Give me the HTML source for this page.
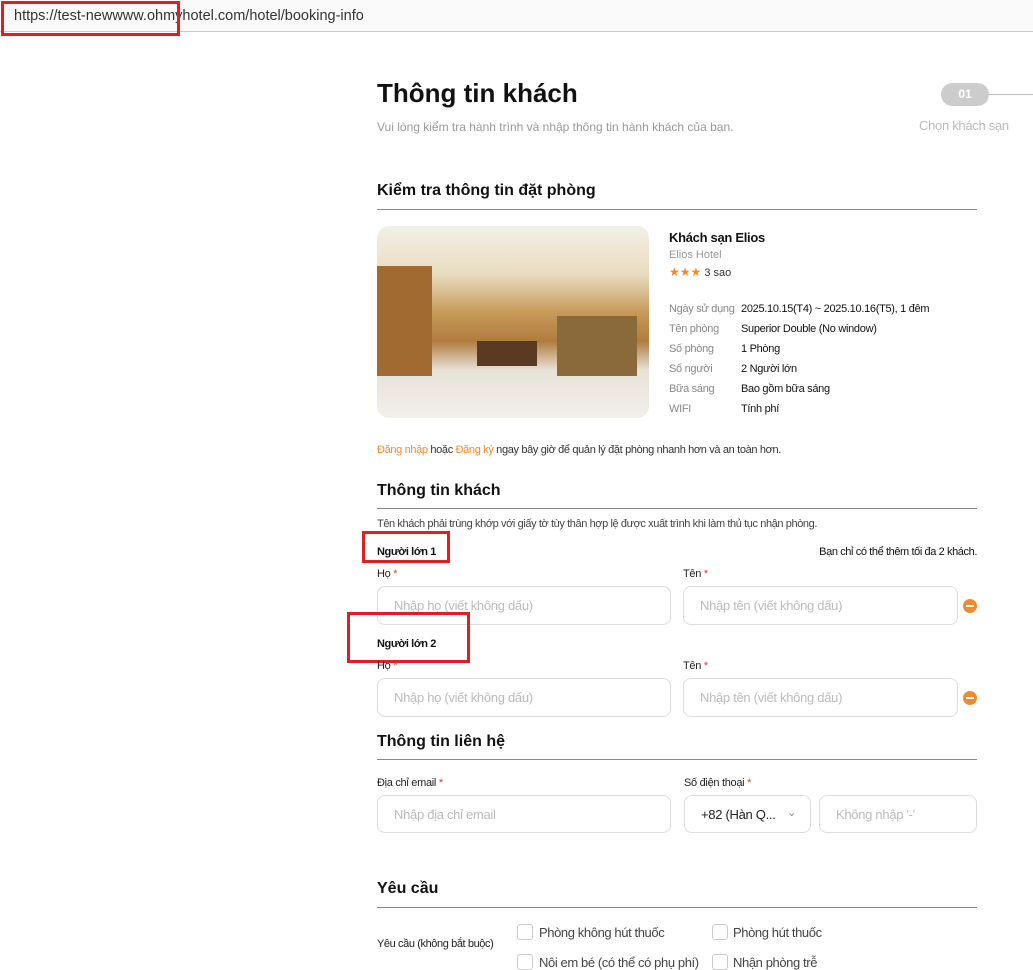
<!DOCTYPE html>
<html><head><meta charset="utf-8"><style>
*{margin:0;padding:0;box-sizing:border-box}
body{width:1033px;height:969px;overflow:hidden;background:#fff;font-family:"Liberation Sans",Arial,sans-serif;color:#111;position:relative}
.a{position:absolute;white-space:nowrap}
.red{position:absolute;border:3px solid #e02020}
.h2{font-size:16px;font-weight:bold}
.line{position:absolute;left:377px;width:600px;height:1px;background:#888}
.inp{position:absolute;height:39px;border:1px solid #ddd;border-radius:8px;font-size:13px;color:#bbb;padding:11px 0 0 16px;letter-spacing:-0.3px}
.lbl{font-size:11px;color:#222;letter-spacing:-0.3px}
.st{color:#e33}
.minus{position:absolute;width:14px;height:14px;border-radius:50%;background:#f08a30}
.minus:after{content:"";position:absolute;left:3px;top:6px;width:8px;height:2px;background:#fff}
.g{color:#888;font-size:11px;letter-spacing:-0.3px}
.v{font-size:11px;color:#111;letter-spacing:-0.3px}
.cb{position:absolute;width:16px;height:16px;border:1px solid #ccc;border-radius:3px}
</style></head><body>
<div class="a" style="left:0;top:0;width:1033px;height:32px;background:#fafafa;border-bottom:1px solid #ccc"></div>
<div class="a" style="left:14px;top:8px;font-size:14.5px;color:#333">https://test-newwww.ohmyhotel.com/hotel/booking-info</div>
<div class="red" style="left:1px;top:1px;width:179px;height:35px"></div>

<div class="a" style="left:377px;top:78px;font-size:26px;font-weight:bold">Thông tin khách</div>
<div class="a" style="left:377px;top:120px;font-size:12px;color:#999">Vui lòng kiểm tra hành trình và nhập thông tin hành khách của bạn.</div>
<div class="a" style="left:941px;top:83px;width:48px;height:23px;border-radius:12px;background:#ccc;color:#fff;font-size:12px;font-weight:bold;text-align:center;line-height:23px">01</div>
<div class="a" style="left:989px;top:94px;width:44px;height:1px;background:#bbb"></div>
<div class="a" style="left:919px;top:118px;font-size:13px;color:#bbb;letter-spacing:-0.3px">Chọn khách sạn</div>

<div class="a h2" style="left:377px;top:182px">Kiểm tra thông tin đặt phòng</div>
<div class="line" style="top:209px"></div>
<div class="a" style="left:377px;top:226px;width:272px;height:192px;border-radius:12px;overflow:hidden;background:linear-gradient(180deg,#f4f0e6 0%,#e9dcc0 25%,#c79a5a 45%,#b07c3e 60%,#e8e2d8 75%,#f2efea 100%)">
<div style="position:absolute;left:0;top:40px;width:55px;height:110px;background:#a06a30"></div>
<div style="position:absolute;left:100px;top:115px;width:60px;height:25px;background:#5a3a20"></div>
<div style="position:absolute;left:180px;top:90px;width:80px;height:60px;background:#8a6a3a"></div>
</div>
<div class="a" style="left:669px;top:230px;font-size:13px;font-weight:bold;letter-spacing:-0.3px">Khách sạn Elios</div>
<div class="a" style="left:669px;top:249px;font-size:11px;color:#999">Elios Hotel</div>
<div class="a" style="left:669px;top:265px;font-size:11px;color:#333"><span style="color:#f08a30;font-size:12px">★★★</span> 3 sao</div>
<div class="a g" style="left:669px;top:303px">Ngày sử dụng</div><div class="a v" style="left:741px;top:303px">2025.10.15(T4) ~ 2025.10.16(T5), 1 đêm</div>
<div class="a g" style="left:669px;top:323px">Tên phòng</div><div class="a v" style="left:741px;top:323px">Superior Double (No window)</div>
<div class="a g" style="left:669px;top:343px">Số phòng</div><div class="a v" style="left:741px;top:343px">1 Phòng</div>
<div class="a g" style="left:669px;top:363px">Số người</div><div class="a v" style="left:741px;top:363px">2 Người lớn</div>
<div class="a g" style="left:669px;top:383px">Bữa sáng</div><div class="a v" style="left:741px;top:383px">Bao gồm bữa sáng</div>
<div class="a g" style="left:669px;top:403px">WIFI</div><div class="a v" style="left:741px;top:403px">Tính phí</div>

<div class="a" style="left:377px;top:444px;font-size:11px;color:#333;letter-spacing:-0.35px"><span style="color:#f08a30">Đăng nhập</span> hoặc <span style="color:#f08a30">Đăng ký</span> ngay bây giờ để quản lý đặt phòng nhanh hơn và an toàn hơn.</div>

<div class="a h2" style="left:377px;top:482px">Thông tin khách</div>
<div class="line" style="top:508px"></div>
<div class="a" style="left:377px;top:518px;font-size:11px;color:#444;letter-spacing:-0.4px">Tên khách phải trùng khớp với giấy tờ tùy thân hợp lệ được xuất trình khi làm thủ tục nhận phòng.</div>
<div class="a" style="left:377px;top:546px;font-size:11px;font-weight:bold;letter-spacing:-0.4px">Người lớn 1</div>
<div class="a" style="right:56px;top:546px;font-size:11px;letter-spacing:-0.4px">Bạn chỉ có thể thêm tối đa 2 khách.</div>
<div class="red" style="left:362px;top:531px;width:88px;height:32px"></div>
<div class="a lbl" style="left:377px;top:568px">Họ <span class="st">*</span></div>
<div class="a lbl" style="left:683px;top:568px">Tên <span class="st">*</span></div>
<div class="inp" style="left:377px;top:586px;width:294px">Nhập họ (viết không dấu)</div>
<div class="inp" style="left:683px;top:586px;width:275px">Nhập tên (viết không dấu)</div>
<div class="minus" style="left:963px;top:599px"></div>

<div class="a" style="left:377px;top:638px;font-size:11px;font-weight:bold;letter-spacing:-0.4px">Người lớn 2</div>
<div class="red" style="left:347px;top:612px;width:123px;height:51px"></div>
<div class="a lbl" style="left:377px;top:660px">Họ <span class="st">*</span></div>
<div class="a lbl" style="left:683px;top:660px">Tên <span class="st">*</span></div>
<div class="inp" style="left:377px;top:678px;width:294px">Nhập họ (viết không dấu)</div>
<div class="inp" style="left:683px;top:678px;width:275px">Nhập tên (viết không dấu)</div>
<div class="minus" style="left:963px;top:691px"></div>

<div class="a h2" style="left:377px;top:733px">Thông tin liên hệ</div>
<div class="line" style="top:759px"></div>
<div class="a lbl" style="left:377px;top:777px">Địa chỉ email <span class="st">*</span></div>
<div class="a lbl" style="left:684px;top:777px">Số điện thoại <span class="st">*</span></div>
<div class="inp" style="left:377px;top:795px;width:294px;height:38px">Nhập địa chỉ email</div>
<div class="inp" style="left:684px;top:795px;width:127px;height:38px;color:#222">+82 (Hàn Q... <span style="position:absolute;right:14px;top:10px;color:#888;font-size:11px">⌄</span></div>
<div class="inp" style="left:819px;top:795px;width:158px;height:38px">Không nhập '-'</div>

<div class="a h2" style="left:377px;top:880px">Yêu cầu</div>
<div class="line" style="top:907px"></div>
<div class="a" style="left:377px;top:938px;font-size:11px;color:#222;letter-spacing:-0.4px">Yêu cầu (không bắt buộc)</div>
<div class="cb" style="left:517px;top:924px"></div><div class="a" style="left:539px;top:925px;font-size:13px;color:#444;letter-spacing:-0.4px">Phòng không hút thuốc</div>
<div class="cb" style="left:712px;top:924px"></div><div class="a" style="left:733px;top:925px;font-size:13px;color:#444;letter-spacing:-0.4px">Phòng hút thuốc</div>
<div class="cb" style="left:517px;top:954px"></div><div class="a" style="left:539px;top:955px;font-size:13px;color:#444;letter-spacing:-0.4px">Nôi em bé (có thể có phụ phí)</div>
<div class="cb" style="left:712px;top:954px"></div><div class="a" style="left:733px;top:955px;font-size:13px;color:#444;letter-spacing:-0.4px">Nhận phòng trễ</div>
</body></html>
